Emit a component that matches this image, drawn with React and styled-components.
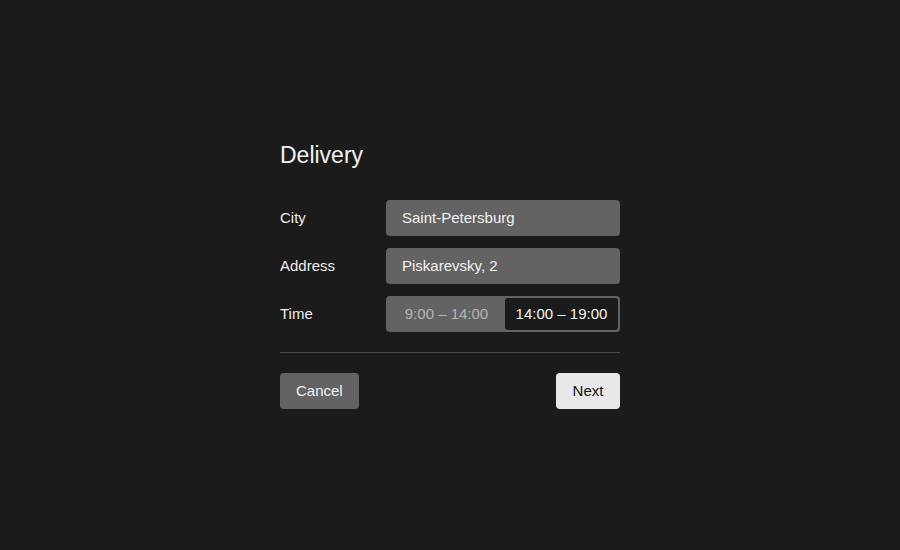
import styled, { createGlobalStyle } from "styled-components";

const GlobalStyle = createGlobalStyle`
  html, body {
    margin: 0;
    padding: 0;
    background: #1b1b1b;
  }
  body {
    font-family: "Liberation Sans", Arial, sans-serif;
    color: #f0f0f0;
  }
`;

export default function App() {
  return (
    <>
      <GlobalStyle />
      <Page>
        <Form>
          <Title>Delivery</Title>
          <Fields>
            <Row>
              <Label>City</Label>
              <Input>Saint-Petersburg</Input>
            </Row>
            <Row>
              <Label>Address</Label>
              <Input>Piskarevsky, 2</Input>
            </Row>
            <Row>
              <Label>Time</Label>
              <Segmented>
                <Segment>9:00 – 14:00</Segment>
                <Segment active>14:00 – 19:00</Segment>
              </Segmented>
            </Row>
          </Fields>
          <Divider />
          <Actions>
            <Button>Cancel</Button>
            <Button primary>Next</Button>
          </Actions>
        </Form>
      </Page>
    </>
  );
}

const Page = styled.div`
  min-height: 100vh;
  display: flex;
  align-items: center;
  justify-content: center;
`;

const Form = styled.div`
  width: 340px;
  display: flex;
  flex-direction: column;
`;

const Title = styled.h2`
  margin: 0 0 31px;
  font-size: 23px;
  line-height: 27px;
  font-weight: 400;
  color: #f2f2f2;
`;

const Fields = styled.div`
  display: flex;
  flex-direction: column;
  gap: 12px;
`;

const Row = styled.div`
  display: grid;
  grid-template-columns: 106px 1fr;
  align-items: center;
`;

const Label = styled.span`
  font-size: 15px;
  color: #ececec;
`;

const Input = styled.div`
  height: 36px;
  box-sizing: border-box;
  padding: 0 16px;
  display: flex;
  align-items: center;
  background: #636363;
  border-radius: 4px;
  font-size: 15px;
  color: #f2f2f2;
`;

const Segmented = styled.div`
  height: 36px;
  box-sizing: border-box;
  padding: 2px;
  display: grid;
  grid-template-columns: 117px 1fr;
  background: #636363;
  border-radius: 4px;
`;

const Segment = styled.div`
  display: flex;
  align-items: center;
  justify-content: center;
  font-size: 15px;
  border-radius: 3px;
  color: ${(p) => (p.active ? "#f4f4f4" : "#b4b4b4")};
  background: ${(p) => (p.active ? "#1b1b1b" : "transparent")};
`;

const Divider = styled.hr`
  margin: 20px 0;
  border: 0;
  height: 1px;
  background: #4a4a4a;
`;

const Actions = styled.div`
  display: flex;
  justify-content: space-between;
`;

const Button = styled.button`
  height: 36px;
  min-width: 64px;
  padding: 0 16px;
  border: 0;
  border-radius: 4px;
  font-family: inherit;
  font-size: 15px;
  background: ${(p) => (p.primary ? "#e8e8e8" : "#636363")};
  color: ${(p) => (p.primary ? "#141414" : "#f2f2f2")};
`;
